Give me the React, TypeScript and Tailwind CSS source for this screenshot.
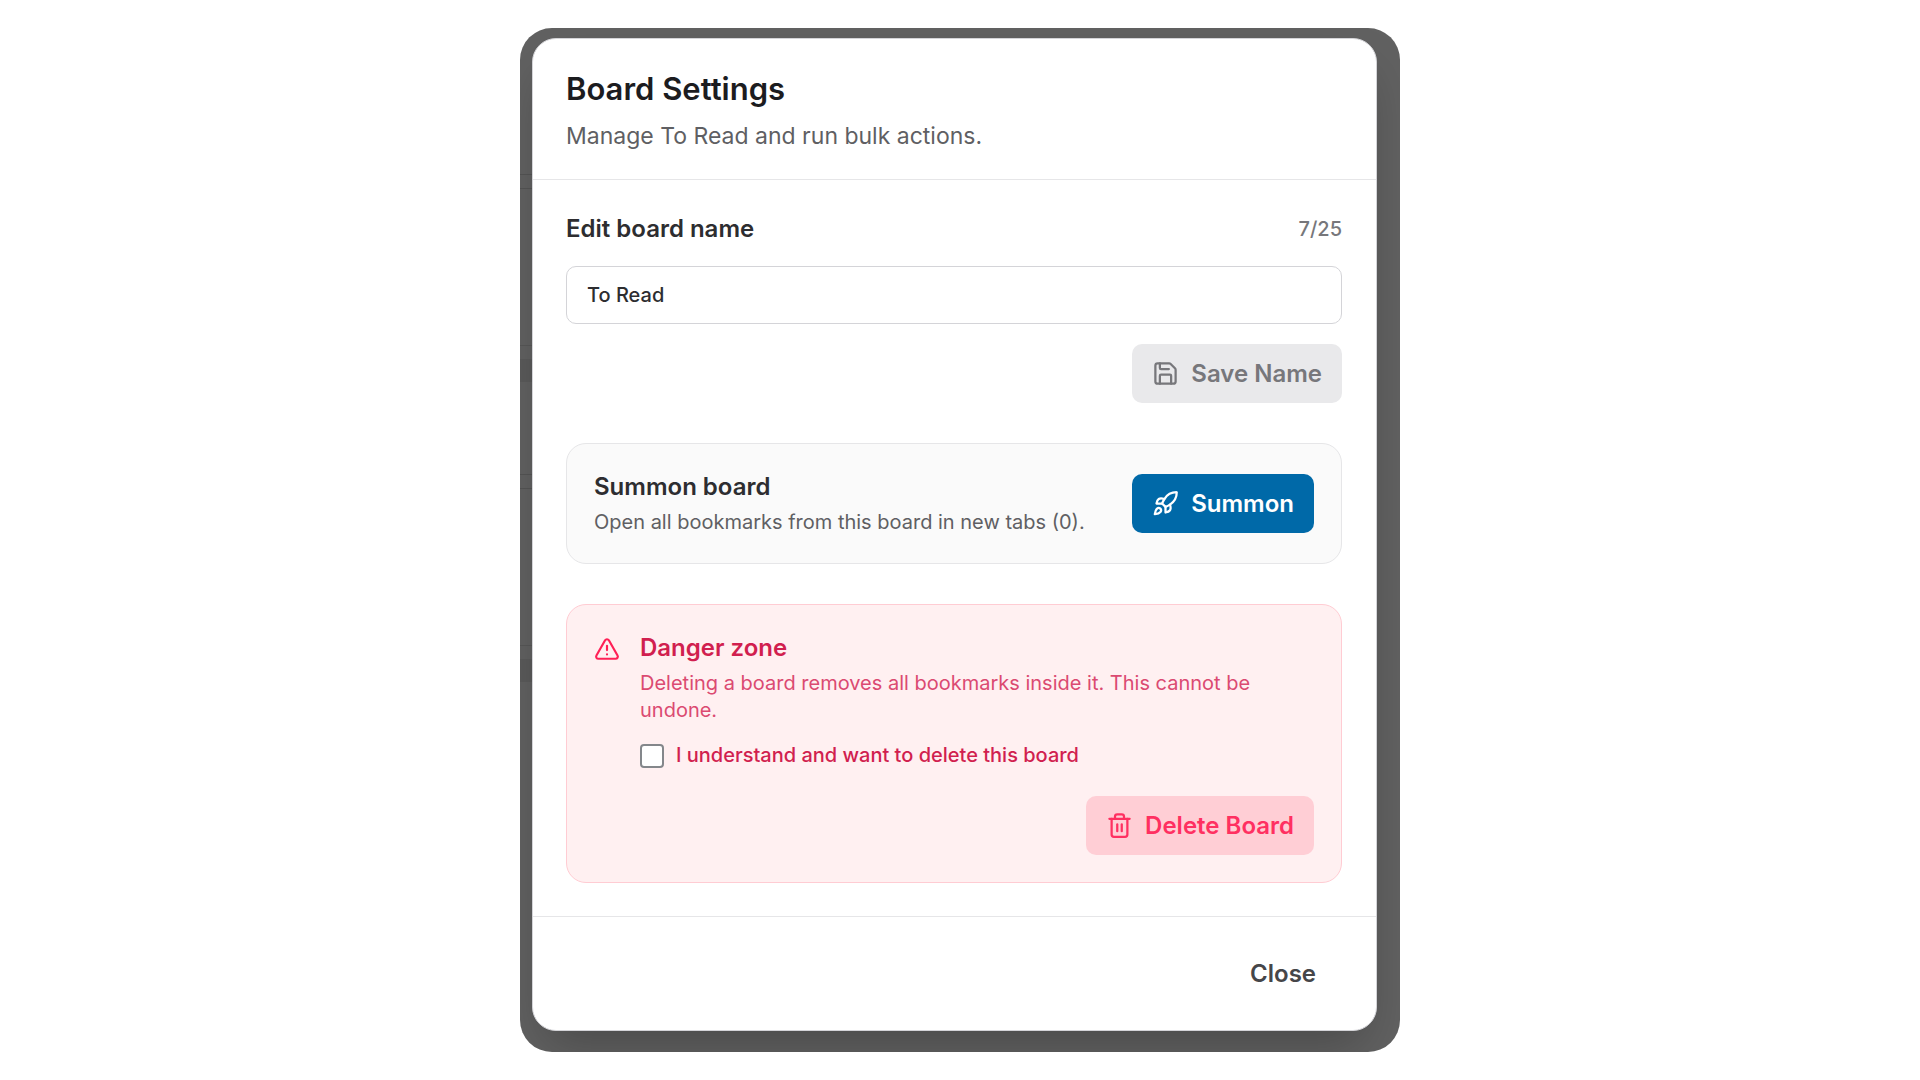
import { useState } from 'react'
import { Rocket, Save, Trash2, TriangleAlert } from 'lucide-react'

const MAX_NAME_LENGTH = 25

const BUTTON = 'flex h-[59px] items-center gap-3 rounded-[10px] text-[24px] leading-8 font-semibold'

// Dimmed board list that peeks out to the left of the dialog
function BoardListEdge() {
  return (
    <div aria-hidden="true" className="absolute inset-y-0 left-0 flex w-3 flex-col">
      <div className="h-[146px]" />
      <div className="h-[15px] border-y border-[#545454]" />
      <div className="h-[156px]" />
      <div className="h-[14px] border-t border-[#575757]" />
      <div className="h-[23px] bg-[#5a5a5a]" />
      <div className="h-[92px]" />
      <div className="h-[15px] border-y border-[#545454]" />
      <div className="h-[156px]" />
      <div className="h-[14px] border-t border-[#575757]" />
      <div className="h-[23px] bg-[#5a5a5a]" />
    </div>
  )
}

export default function App() {
  const [name, setName] = useState('To Read')
  const [savedName] = useState('To Read')
  const [confirmed, setConfirmed] = useState(false)

  return (
    <main className="flex min-h-screen items-center justify-center bg-white font-['Inter',sans-serif]">
      <div className="relative w-full max-w-[880px] overflow-hidden rounded-[32px] bg-[#616161] pt-[10px] pr-[23px] pb-[21px] pl-3">
        <BoardListEdge />

        <section
          role="dialog"
          aria-labelledby="dialog-title"
          className="relative rounded-3xl border border-zinc-300 bg-white shadow-2xl"
        >
          <header className="border-b border-[#e6e6e8] px-[33px] pt-[34px] pb-[27px]">
            <h1 id="dialog-title" className="text-[31px] leading-8 font-semibold text-[#1c1c1f]">
              Board Settings
            </h1>
            <p className="mt-[15px] text-[23px] leading-8 text-[#5f5f63]">Manage {savedName} and run bulk actions.</p>
          </header>

          <div className="flex flex-col gap-10 py-[33px] pr-[34px] pl-[33px]">
            <form onSubmit={(e) => e.preventDefault()}>
              <div className="flex items-center justify-between">
                <label htmlFor="board-name" className="text-[24px] leading-8 font-semibold text-[#2d2d30]">
                  Edit board name
                </label>
                <span className="text-[20px] leading-8 font-medium text-[#77777b]">
                  {name.length}/{MAX_NAME_LENGTH}
                </span>
              </div>
              <input
                id="board-name"
                type="text"
                value={name}
                maxLength={MAX_NAME_LENGTH}
                onChange={(e) => setName(e.target.value)}
                className="mt-[21px] h-[58px] w-full rounded-[10px] border border-zinc-300 px-5 text-[20px] font-medium text-[#2d2d30]"
              />
              <div className="mt-5 flex justify-end">
                <button
                  type="submit"
                  disabled={name === savedName}
                  className={`${BUTTON} bg-[#e9e9eb] px-5 text-[#77777b]`}
                >
                  <Save size={27} strokeWidth={2} />
                  Save Name
                </button>
              </div>
            </form>

            <section className="flex items-center justify-between rounded-[20px] border border-[#e6e6e8] bg-zinc-50 p-[27px]">
              <div>
                <h2 className="text-[24px] leading-8 font-semibold text-[#2d2d30]">Summon board</h2>
                <p className="mt-[6px] text-[20px] leading-[27px] text-[#5f5f63]">
                  Open all bookmarks from this board in new tabs (0).
                </p>
              </div>
              <button type="button" className={`${BUTTON} bg-sky-700 px-5 text-white`}>
                <Rocket size={27} strokeWidth={2} />
                Summon
              </button>
            </section>

            <section className="rounded-[20px] border border-[#ffccd3] bg-[#fff0f1] p-[27px]">
              <div className="flex items-start gap-5">
                <TriangleAlert size={26} strokeWidth={2} className="mt-1 shrink-0 text-rose-500" />
                <div>
                  <h2 className="text-[24px] leading-8 font-semibold text-[#d11f4f]">Danger zone</h2>
                  <p className="mt-[6px] text-[20px] leading-[27px] text-[#db4a71]">
                    Deleting a board removes all bookmarks inside it. This cannot be undone.
                  </p>
                  <label className="mt-[18px] flex items-center gap-3 text-[20px] leading-[27px] font-medium text-[#d11f4f]">
                    <input
                      type="checkbox"
                      checked={confirmed}
                      onChange={(e) => setConfirmed(e.target.checked)}
                      className="size-6 shrink-0 appearance-none rounded-[4px] border-2 border-[#84878b] bg-white checked:bg-rose-500"
                    />
                    I understand and want to delete this board
                  </label>
                </div>
              </div>
              <div className="mt-[27px] flex justify-end">
                <button type="button" disabled={!confirmed} className={`${BUTTON} bg-[#ffced5] px-5 text-[#ff3061]`}>
                  <Trash2 size={27} strokeWidth={2} />
                  Delete Board
                </button>
              </div>
            </section>
          </div>

          <footer className="flex justify-end border-t border-[#e6e6e8] px-[33px] py-[27px]">
            <button type="button" className={`${BUTTON} px-[27px] text-[#464649]`}>
              Close
            </button>
          </footer>
        </section>
      </div>
    </main>
  )
}
